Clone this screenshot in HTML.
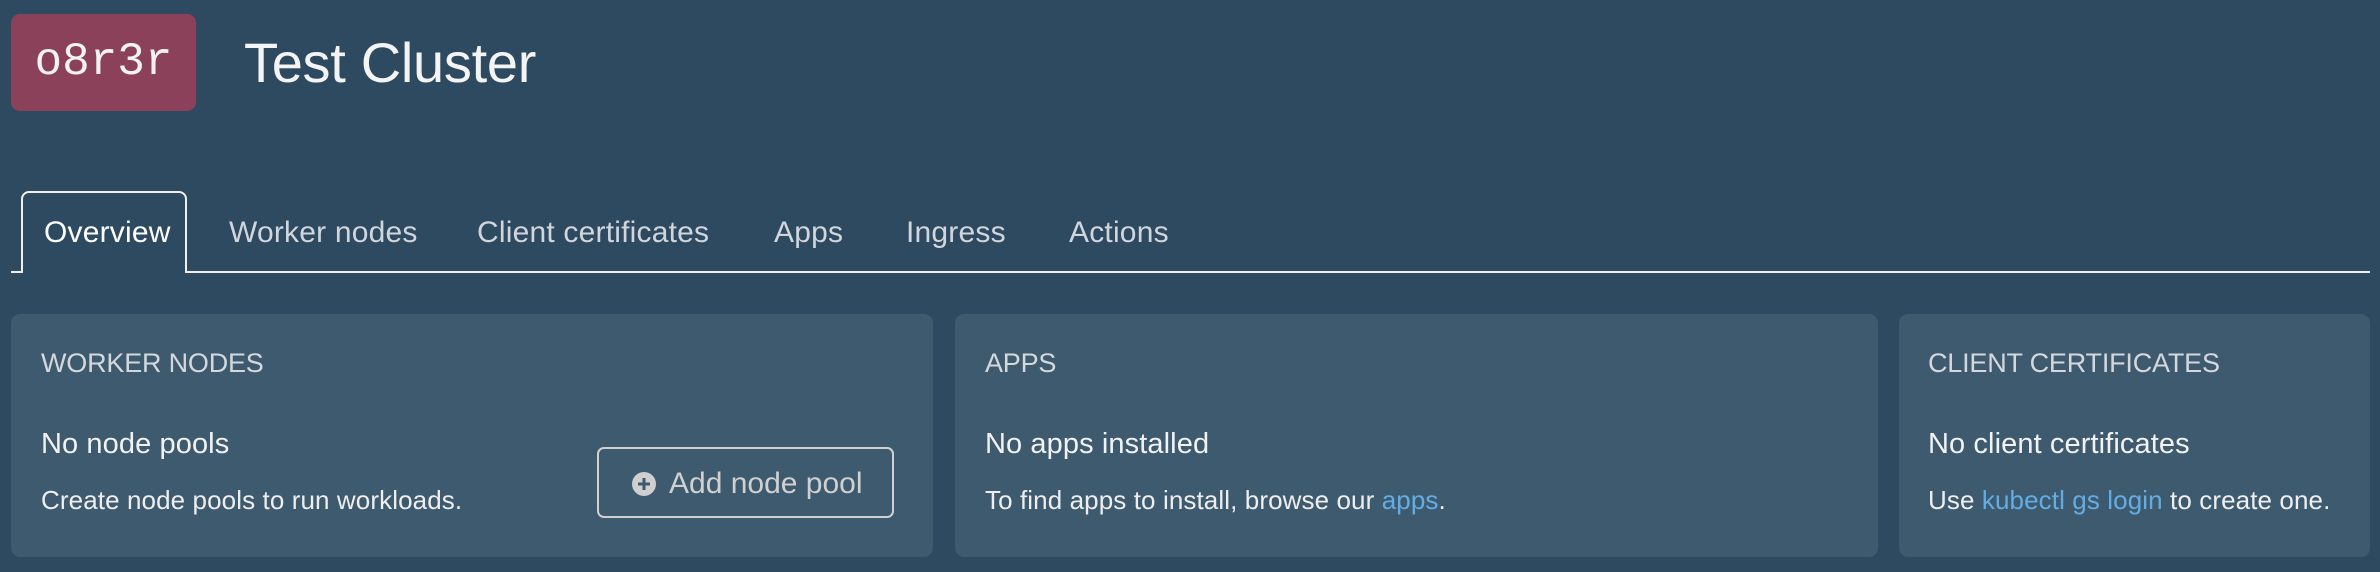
<!DOCTYPE html>
<html><head><meta charset="utf-8"><style>
*{margin:0;padding:0;box-sizing:border-box}
html,body{width:2380px;height:572px;overflow:hidden;background:#2e4a60;font-family:"Liberation Sans",sans-serif;color:#fff}
.abs{position:absolute;white-space:nowrap}
.logo{left:11px;top:14px;width:185px;height:97px;background:#8b4159;border-radius:9px;font-family:"Liberation Mono",monospace;font-size:46px;line-height:97px;text-align:center;color:#f2f2f2}
.title{left:244px;top:30px;font-size:56px;font-weight:300;color:#f4f4f4;letter-spacing:-0.3px}
.tabline{left:11px;top:271px;width:2359px;height:2px;background:#f0f0f0}
.tabbox{left:21px;top:191px;width:166px;height:82px;border:2px solid #f0f0f0;border-bottom:none;border-radius:8px 8px 0 0;background:#2e4a60}
.tab{top:216px;font-size:30px;color:#d0d6dc;letter-spacing:0.2px}
.card{top:314px;height:243px;background:#3e5a6f;border-radius:9px}
.h{font-size:27px;color:#d4d8dc;top:348px;letter-spacing:-0.2px}
.s{font-size:29px;color:#f2f2f2;top:428px;letter-spacing:0.1px}
.p{font-size:26px;color:#eee;top:485px;letter-spacing:0.1px}
a{color:#62ade4;text-decoration:none}
.btn{left:597px;top:447px;width:297px;height:71px;border:2px solid #d0d0d0;border-radius:7px}
</style></head><body>
<div class="abs logo">o8r3r</div>
<div class="abs title">Test Cluster</div>
<div class="abs tabline"></div>
<div class="abs tabbox"></div>
<div class="abs tab" style="left:44px;color:#fff">Overview</div>
<div class="abs tab" style="left:229px">Worker nodes</div>
<div class="abs tab" style="left:477px">Client certificates</div>
<div class="abs tab" style="left:774px">Apps</div>
<div class="abs tab" style="left:906px">Ingress</div>
<div class="abs tab" style="left:1069px">Actions</div>

<div class="abs card" style="left:11px;width:922px"></div>
<div class="abs card" style="left:955px;width:923px"></div>
<div class="abs card" style="left:1899px;width:471px"></div>

<div class="abs h" style="left:41px">WORKER NODES</div>
<div class="abs s" style="left:41px">No node pools</div>
<div class="abs p" style="left:41px">Create node pools to run workloads.</div>
<div class="abs btn"></div>
<svg class="abs" style="left:631px;top:471px" width="26" height="26" viewBox="0 0 26 26"><circle cx="13" cy="13" r="12" fill="#cfcfcf"/><path d="M13 7v12M7 13h12" stroke="#3e5a6f" stroke-width="3"/></svg>
<div class="abs" style="left:669px;top:467px;font-size:30px;color:#d0d0d0;letter-spacing:0px">Add node pool</div>

<div class="abs h" style="left:985px">APPS</div>
<div class="abs s" style="left:985px">No apps installed</div>
<div class="abs p" style="left:985px">To find apps to install, browse our <a>apps</a>.</div>

<div class="abs h" style="left:1928px">CLIENT CERTIFICATES</div>
<div class="abs s" style="left:1928px">No client certificates</div>
<div class="abs p" style="left:1928px">Use <a>kubectl gs login</a> to create one.</div>
</body></html>
